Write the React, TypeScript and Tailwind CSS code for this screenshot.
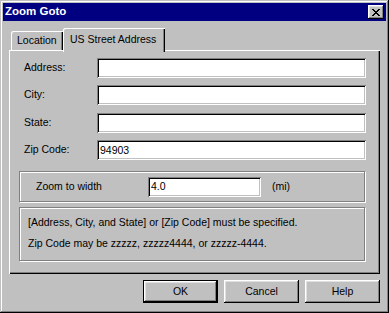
import React from "react";

const raised =
  "shadow-[inset_-1px_-1px_#000,inset_1px_1px_#fff,inset_-2px_-2px_#808080,inset_2px_2px_#dfdfdf]";
const sunken =
  "shadow-[inset_1px_1px_#808080,inset_-1px_-1px_#fff,inset_2px_2px_#000,inset_-2px_-2px_#c0c0c0]";
const etched = "border border-[#808080] shadow-[inset_1px_1px_#fff,1px_1px_#fff]";

function Field({ value = "", className = "" }: { value?: string; className?: string }) {
  return (
    <div className={`h-[20px] bg-white ${sunken} flex items-center pl-[3px] ${className}`}>
      <span className="leading-none">{value}</span>
    </div>
  );
}

function Row({ label, value, className = "" }: { label: string; value?: string; className?: string }) {
  return (
    <div className={`flex items-center h-[20px] ${className}`}>
      <div className="w-[88px] pl-[15px]">{label}</div>
      <Field value={value} className="w-[269px]" />
    </div>
  );
}

function Btn({ label, def = false }: { label: string; def?: boolean }) {
  if (def) {
    return (
      <div className="w-[75px] h-[23px] border border-black">
        <div className={`w-full h-full flex items-center justify-center ${raised}`}>{label}</div>
      </div>
    );
  }
  return (
    <div className={`w-[75px] h-[23px] flex items-center justify-center ${raised}`}>{label}</div>
  );
}

const xPixels: [number, number, number][] = [
  [0, 0, 2], [6, 0, 2],
  [1, 1, 2], [5, 1, 2],
  [2, 2, 4],
  [3, 3, 2],
  [2, 4, 4],
  [1, 5, 2], [5, 5, 2],
  [0, 6, 2], [6, 6, 2],
];

export default function App() {
  return (
    <div
      className={`w-[389px] h-[313px] bg-[#c0c0c0] p-[3px] text-black text-[10.5px] font-['Liberation_Sans',Arial,sans-serif] shadow-[inset_-1px_-1px_#000,inset_1px_1px_#c0c0c0,inset_-2px_-2px_#808080,inset_2px_2px_#fff] flex flex-col`}
    >
      {/* Title bar */}
      <div className="h-[18px] bg-[#000080] flex items-center justify-between pl-[2px] pr-[2px]">
        <span className="text-white font-bold text-[11.5px] leading-none">Zoom Goto</span>
        <div className={`w-[16px] h-[14px] bg-[#c0c0c0] flex items-center justify-center ${raised}`}>
          <svg width="8" height="7" viewBox="0 0 8 7" shapeRendering="crispEdges" className="block">
            {xPixels.map(([x, y, w], i) => (
              <rect key={i} x={x} y={y} width={w} height={1} fill="#000000" />
            ))}
          </svg>
        </div>
      </div>

      {/* Tabs */}
      <div className="mt-[7px] h-[22px] ml-[8px] flex items-end">
        <div className="w-[52px] h-[19px] bg-[#c0c0c0] shadow-[inset_1px_1px_#fff,inset_-1px_0_#000,inset_-2px_0_#808080] rounded-tl-[2px] flex items-center pl-[6px] pt-[1px]">
          Location
        </div>
        <div className="relative z-10 w-[102px] h-[24px] -mb-[2px] bg-[#c0c0c0] shadow-[inset_1px_1px_#fff,inset_-1px_0_#000,inset_-2px_0_#808080] rounded-tl-[2px] flex items-start pl-[7px] pt-[4px]">
          US Street Address
        </div>
      </div>

      {/* Panel */}
      <div className="ml-[6px] w-[371px] h-[224px] shadow-[inset_1px_1px_#fff,inset_-1px_-1px_#000,inset_-2px_-2px_#808080] flex flex-col pt-[8px]">
        <Row label="Address:" />
        <Row label="City:" className="mt-[7px]" />
        <Row label="State:" className="mt-[8px]" />
        <Row label="Zip Code:" value="94903" className="mt-[7px]" />

        <div className={`ml-[10px] mt-[11px] w-[346px] h-[31px] ${etched} flex items-center pl-[16px]`}>
          <div className="w-[112px]">Zoom to width</div>
          <Field value="4.0" className="w-[113px]" />
          <div className="ml-[11px]">(mi)</div>
        </div>

        <div className={`ml-[10px] mt-[5px] w-[346px] h-[54px] ${etched} pl-[8px] pt-[4px] leading-[21px]`}>
          <div>[Address, City, and State] or [Zip Code] must be specified.</div>
          <div>Zip Code may be zzzzz, zzzzz4444, or zzzzz-4444.</div>
        </div>
      </div>

      {/* Buttons */}
      <div className="mt-[6px] flex justify-end gap-[6px] pr-[6px]">
        <Btn label="OK" def />
        <Btn label="Cancel" />
        <Btn label="Help" />
      </div>
    </div>
  );
}
